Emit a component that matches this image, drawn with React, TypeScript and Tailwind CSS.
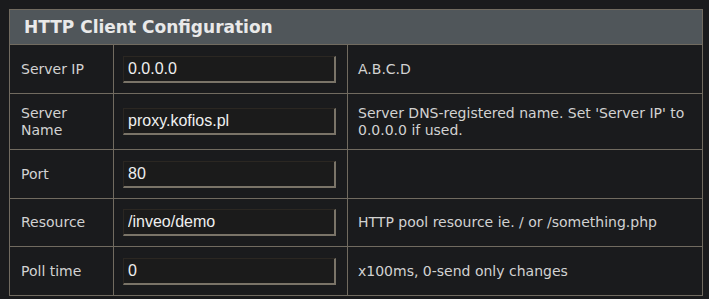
import React from "react";

const rows = [
  { label: "Server IP", value: "0.0.0.0", desc: "A.B.C.D", h: "h-[49px]" },
  { label: "Server Name", value: "proxy.kofios.pl", desc: "Server DNS-registered name. Set 'Server IP' to 0.0.0.0 if used.", h: "h-[56px]" },
  { label: "Port", value: "80", desc: "", h: "h-[49px]" },
  { label: "Resource", value: "/inveo/demo", desc: "HTTP pool resource ie. / or /something.php", h: "h-[48px]" },
  { label: "Poll time", value: "0", desc: "x100ms, 0-send only changes", h: "h-[49px]" },
];

export default function App() {
  return (
    <div className="w-[709px] h-[299px] bg-[#1a1b1d] pt-[9px] pl-[9px]" style={{ fontFamily: "Verdana, 'DejaVu Sans', sans-serif" }}>
      <table className="border-collapse w-[694px] table-fixed">
        <colgroup>
          <col className="w-[104px]" />
          <col className="w-[234px]" />
          <col />
        </colgroup>
        <thead>
          <tr className="h-[35px]">
            <th colSpan={3} className="bg-[#50565a] border border-[#716b60] text-left pl-[14px] text-[17px] font-bold text-[#e9e9e9] leading-none">
              HTTP Client Configuration
            </th>
          </tr>
        </thead>
        <tbody>
          {rows.map((r) => (
            <tr key={r.label} className={r.h}>
              <td className="border border-[#716b60] pl-[11px] pr-[8px] text-[14px] leading-[17px] text-[#d2d2d2] align-middle">
                {r.label}
              </td>
              <td className="border border-[#716b60] pl-[9px] pr-[8px] align-middle">
                <input
                  readOnly
                  value={r.value}
                  className="block w-[213px] h-[27px] bg-[#1b1b1b] border-t border-l border-t-[#2b2722] border-l-[#2b2722] border-b-2 border-r-2 border-b-[#7a7468] border-r-[#7a7468] pl-[4px] text-[16px] text-[#efefef] outline-none"
                  style={{ fontFamily: "'Liberation Sans', Arial, sans-serif" }}
                />
              </td>
              <td className="border border-[#716b60] pl-[10px] pr-[10px] text-[14px] leading-[17px] text-[#d2d2d2] align-middle">
                {r.desc}
              </td>
            </tr>
          ))}
        </tbody>
      </table>
    </div>
  );
}
